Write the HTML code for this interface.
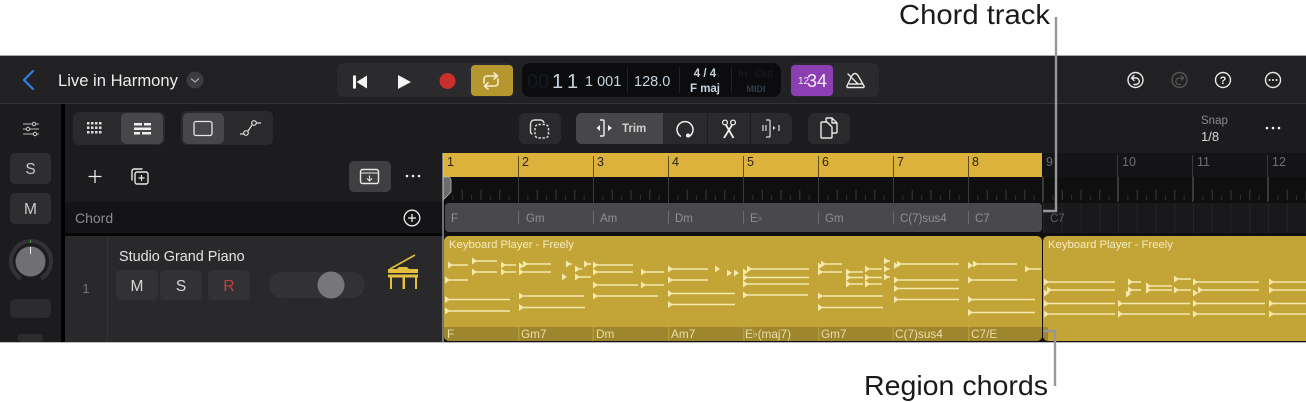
<!DOCTYPE html>
<html lang="en">
<head>
<meta charset="utf-8">
<title>Chord track</title>
<style>
html,body{margin:0;padding:0;background:#fff;width:1306px;height:402px;overflow:hidden}
svg{display:block;font-family:"Liberation Sans",sans-serif}
.n path{fill:none;stroke:#f4e8ae;stroke-width:1.5;marker-start:url(#t)}
.ic{fill:none;stroke:#e8e8e8;stroke-width:1.4;stroke-linecap:round;stroke-linejoin:round}
.ch{font-size:11.5px;fill:#8f8f92}
.rc{font-size:11.8px;fill:#ecdfa6}
.bar{font-size:12.5px;fill:#2a2410}
.bard{font-size:12.5px;fill:#6f6f72}
</style>
</head>
<body>
<svg width="1306" height="402" viewBox="0 0 1306 402" xmlns="http://www.w3.org/2000/svg">
<defs>
<marker id="t" markerUnits="userSpaceOnUse" markerWidth="5" markerHeight="7" refX="0" refY="3.5" orient="0" viewBox="0 0 5 7"><path d="M0 0L5 3.500L0 7z" fill="#f4e8ae"/></marker>
<pattern id="tk" patternUnits="userSpaceOnUse" x="443" y="177" width="75" height="26">
<rect x="0" y="0" width="1" height="24" fill="#3a3a3c"/>
<rect x="18.75" y="13" width="1" height="10" fill="#3a3a3a"/><rect x="37.5" y="13" width="1" height="10" fill="#3a3a3a"/><rect x="56.25" y="13" width="1" height="10" fill="#3a3a3a"/>
<rect x="9.4" y="18" width="1" height="5" fill="#303030"/><rect x="28.1" y="18" width="1" height="5" fill="#303030"/><rect x="46.9" y="18" width="1" height="5" fill="#303030"/><rect x="65.6" y="18" width="1" height="5" fill="#303030"/>
</pattern>
<pattern id="gr" patternUnits="userSpaceOnUse" x="443" y="203" width="18.75" height="30"><rect width="1" height="30" fill="#242426"/></pattern>
</defs>

<rect width="1306" height="402" fill="#fff"/>
<!-- app -->
<rect x="0" y="55" width="1306" height="1" fill="#a8a8a8"/>
<rect x="0" y="56" width="1306" height="286" fill="#1c1c1e"/>
<rect x="0" y="56" width="1306" height="47" fill="#212123"/>
<rect x="0" y="103" width="1306" height="1" fill="#343436"/>
<rect x="0" y="342" width="1306" height="1" fill="#bbb"/>

<!-- header left -->
<path d="M33 71L24 80L33 89" fill="none" stroke="#2f7fe6" stroke-width="2.2" stroke-linecap="round" stroke-linejoin="round"/>
<text x="58" y="86" font-size="16.6" fill="#ececec">Live in Harmony</text>
<circle cx="195" cy="80" r="8.5" fill="#3c3c3f"/>
<path d="M191 78.500L195 82L199 78.500" fill="none" stroke="#a8a8aa" stroke-width="1.2"/>

<!-- transport -->
<rect x="337" y="63" width="176" height="34" rx="7" fill="#2b2b2d"/>
<rect x="353" y="75.500" width="3" height="13" fill="#f4f4f4"/><path d="M367 75.500V88.500L356.500 82z" fill="#f4f4f4"/>
<path d="M398 75V89L411 82z" fill="#f4f4f4"/>
<circle cx="447.500" cy="81" r="8" fill="#c8302b"/>
<rect x="471" y="65" width="42" height="31" rx="4" fill="#b5962f"/>
<path d="M484 83V79a3 3 0 0 1 3-3h10M494 73l3.500 3-3.500 3M498 79v4a3 3 0 0 1-3 3H485M488 83l-3.500 3 3.500 3" fill="none" stroke="#f6efd0" stroke-width="1.6" stroke-linecap="round" stroke-linejoin="round"/>

<!-- LCD -->
<rect x="522" y="63" width="259" height="34" rx="8" fill="#0c0c0e"/>
<text x="527" y="88" font-size="20" fill="#121a22">00</text>
<text x="552" y="88" font-size="20" fill="#c6d3de">1</text><text x="567" y="88" font-size="20" fill="#c6d3de">1</text>
<text x="585" y="86" font-size="14.5" fill="#c6d3de">1 001</text>
<text x="634" y="86" font-size="14.5" fill="#c6d3de">128.0</text>
<rect x="627" y="67" width="1" height="26" fill="#1f2226"/><rect x="679" y="67" width="1" height="26" fill="#1f2226"/><rect x="731" y="67" width="1" height="26" fill="#1f2226"/>
<text x="705" y="77" font-size="11.500" fill="#c6d3de" text-anchor="middle" font-weight="bold">4 / 4</text>
<text x="705" y="92" font-size="11.500" fill="#c6d3de" text-anchor="middle" font-weight="bold">F maj</text>
<text x="738" y="77" font-size="11" fill="#171e25">In</text><text x="755" y="77" font-size="11" fill="#171e25">Out</text>
<text x="756" y="92" font-size="9" fill="#2b3f52" text-anchor="middle" font-weight="bold">MIDI</text>

<!-- count-in / metronome -->
<rect x="791" y="63" width="88" height="34" rx="7" fill="#2b2b2d"/>
<rect x="791" y="65" width="42" height="31" rx="4" fill="#8b3fb2"/>
<text x="798" y="84" font-size="10" fill="#f4ecf8">12</text><text x="807" y="87" font-size="18" fill="#f4ecf8">34</text>
<path class="ic" d="M852 75.500Q855 71.500 858 75.500L864 86a1 1 0 0 1-1 1.500H848a1 1 0 0 1-1-1.500zM849.500 84H861.500M848 74L858 84"/>

<!-- header right -->
<circle class="ic" cx="1135.500" cy="80" r="7.500"/><path class="ic" d="M1132 78h4a3 3 0 0 1 0 6.500h-2M1134 75.500l-2.500 2.500 2.500 2.500" stroke-width="1.200"/>
<circle cx="1179.500" cy="80" r="7.500" fill="none" stroke="#555" stroke-width="1.400"/><path d="M1183 78h-4a3 3 0 0 0 0 6.500h2M1181 75.500l2.500 2.500-2.500 2.500" fill="none" stroke="#555" stroke-width="1.200"/>
<circle class="ic" cx="1223" cy="80" r="7.500"/><text x="1223" y="84" font-size="11" font-weight="bold" fill="#eee" text-anchor="middle">?</text>
<circle class="ic" cx="1273" cy="80" r="7.500"/><circle cx="1269.500" cy="80" r="1" fill="#eee"/><circle cx="1273" cy="80" r="1" fill="#eee"/><circle cx="1276.500" cy="80" r="1" fill="#eee"/>

<!-- left strip -->
<rect x="61" y="104" width="4" height="238" fill="#000"/>
<path d="M23 124h16M23 129h16M23 134h16" stroke="#bbb" stroke-width="1"/>
<circle cx="34" cy="124" r="1.700" fill="#1c1c1e" stroke="#ccc"/><circle cx="28" cy="129" r="1.700" fill="#1c1c1e" stroke="#ccc"/><circle cx="35" cy="134" r="1.700" fill="#1c1c1e" stroke="#ccc"/>
<rect x="10" y="153" width="41" height="31" rx="5" fill="#2e2e30"/>
<text x="30.500" y="174" font-size="15.500" fill="#c8c8c8" text-anchor="middle">S</text>
<rect x="10" y="193" width="41" height="31" rx="5" fill="#2e2e30"/>
<text x="30.500" y="214" font-size="15.500" fill="#c8c8c8" text-anchor="middle">M</text>
<path d="M21 278.500A20 20 0 1 1 41 278.500" fill="none" stroke="#333336" stroke-width="4"/>
<circle cx="30.500" cy="261.500" r="15" fill="#707074"/>
<rect x="30" y="247" width="1" height="7" fill="#f2f2f2"/>
<rect x="30" y="240" width="1" height="3" fill="#3f9a4a"/>
<rect x="10" y="299" width="41" height="19" rx="5" fill="#2c2c2e"/>
<rect x="18" y="334" width="25" height="8" rx="3" fill="#2c2c2e"/>

<!-- toolbar left -->
<rect x="73" y="112" width="92" height="33" rx="6" fill="#2a2a2c"/>
<rect x="121" y="113" width="42" height="31" rx="5" fill="#47474a"/>
<g fill="#ddd"><rect x="87" y="122" width="2.500" height="2.500"/><rect x="91" y="122" width="2.500" height="2.500"/><rect x="95" y="122" width="2.500" height="2.500"/><rect x="99" y="122" width="2.500" height="2.500"/><rect x="87" y="126.500" width="2.500" height="2.500"/><rect x="91" y="126.500" width="2.500" height="2.500"/><rect x="95" y="126.500" width="2.500" height="2.500"/><rect x="99" y="126.500" width="2.500" height="2.500"/><rect x="87" y="131" width="2.500" height="2.500"/><rect x="91" y="131" width="2.500" height="2.500"/><rect x="95" y="131" width="2.500" height="2.500"/><rect x="99" y="131" width="2.500" height="2.500"/></g>
<g fill="#eee"><rect x="134" y="123" width="8" height="2.500"/><rect x="144" y="123" width="7" height="2.500"/><rect x="134" y="127.500" width="17" height="2.500"/><rect x="134" y="132" width="6" height="2.500"/><rect x="142" y="132" width="9" height="2.500"/></g>
<rect x="181" y="111" width="92" height="34" rx="6" fill="#2a2a2c"/>
<rect x="183" y="113" width="41" height="31" rx="5" fill="#47474a"/>
<rect x="194" y="121.500" width="18" height="14" rx="2" fill="none" stroke="#e6e6e6" stroke-width="1.300"/>
<path d="M240 134h4.500M248 131L252 125M256 123h5" stroke="#ddd" stroke-width="1.200" fill="none"/>
<circle cx="246" cy="133" r="2.300" fill="none" stroke="#ddd" stroke-width="1.200"/><circle cx="254" cy="123" r="2.300" fill="none" stroke="#ddd" stroke-width="1.200"/>

<!-- toolbar center -->
<rect x="519" y="113" width="42" height="31" rx="6" fill="#2a2a2c"/>
<rect x="535" y="124.500" width="13.500" height="13.500" rx="3.500" fill="none" stroke="#ddd" stroke-width="1.400" stroke-dasharray="2.400 1.600"/>
<path d="M532.500 134a2.500 2.500 0 0 1-2-2.500V124a4 4 0 0 1 4-4h6a4 4 0 0 1 3.500 3" fill="none" stroke="#ddd" stroke-width="1.400"/>
<rect x="576" y="113" width="216" height="31" rx="6" fill="#2a2a2c"/>
<path d="M582 113H663V144H582a6 6 0 0 1-6-6V119a6 6 0 0 1 6-6z" fill="#47474a"/>
<rect x="707" y="113" width="1" height="31" fill="#1c1c1e"/><rect x="750" y="113" width="1" height="31" fill="#1c1c1e"/>
<path d="M600 120h3a1 1 0 0 1 1 1v14a1 1 0 0 1-1 1h-3" fill="none" stroke="#eee" stroke-width="1.400"/>
<path d="M600 125v6l-3.500-3zM608 125v6l4-3z" fill="#eee"/>
<text x="622" y="132" font-size="11.500" font-weight="bold" fill="#cfcfcf">Trim</text>
<path d="M681 136.500A8 8 0 1 1 688 137" fill="none" stroke="#eee" stroke-width="1.500"/><circle cx="688" cy="135.500" r="2" fill="#eee"/>
<path d="M726 125L733.500 138M732 125L724 138" stroke="#eee" stroke-width="1.800" fill="none"/>
<circle cx="725" cy="122.500" r="2.400" fill="none" stroke="#eee" stroke-width="1.300"/><circle cx="733" cy="122.500" r="2.400" fill="none" stroke="#eee" stroke-width="1.300"/>
<path d="M766 120h3a1 1 0 0 1 1 1v15a1 1 0 0 1-1 1h-3M763 125v6M766 125v6M779 125v6" fill="none" stroke="#ddd" stroke-width="1.200"/>
<path d="M773 126v4l2.500-2z" fill="#ddd"/>
<rect x="808" y="113" width="42" height="31" rx="6" fill="#2a2a2c"/>
<path class="ic" d="M826 122v-3a1 1 0 0 1 1-1h5l5 5v9a1 1 0 0 1-1 1h-3M832 118v5h5M822 122h5l5 5v10a1 1 0 0 1-1 1h-9a1 1 0 0 1-1-1v-14a1 1 0 0 1 1-1z" stroke-width="1.300"/>

<!-- toolbar right -->
<text x="1201" y="124" font-size="11.500" fill="#8a8a8c">Snap</text>
<text x="1201" y="141" font-size="13" fill="#d8d8d8">1/8</text>
<circle cx="1267" cy="128" r="1.300" fill="#eee"/><circle cx="1273" cy="128" r="1.300" fill="#eee"/><circle cx="1279" cy="128" r="1.300" fill="#eee"/>

<!-- track list header -->
<path d="M95 170V183M88.500 176.500H101.500" stroke="#e8e8e8" stroke-width="1.300"/>
<path class="ic" d="M132 180v-9a2 2 0 0 1 2-2h8" stroke-width="1.200"/>
<rect class="ic" x="135" y="172" width="13" height="12" rx="2" stroke-width="1.200"/>
<path d="M141.500 175v6M138.500 178h6" stroke="#e8e8e8" stroke-width="1.200"/>
<rect x="349" y="161" width="42" height="31" rx="5" fill="#3f3f42"/>
<rect class="ic" x="360.500" y="169.500" width="18" height="14" rx="2" stroke-width="1.200"/>
<path d="M360.500 173h18M369.500 175.500v5M367 178.500l2.500 2.500 2.500-2.500" fill="none" stroke="#e8e8e8" stroke-width="1.100"/>
<circle cx="407" cy="176" r="1.300" fill="#eee"/><circle cx="413" cy="176" r="1.300" fill="#eee"/><circle cx="419" cy="176" r="1.300" fill="#eee"/>

<!-- chord row -->
<rect x="65" y="202" width="378" height="31" fill="#141416"/>
<text x="75" y="223" font-size="14" fill="#8c8c8e">Chord</text>
<circle cx="412" cy="218" r="7.800" fill="none" stroke="#ececec" stroke-width="1.300"/>
<path d="M412 214v8M408 218h8" stroke="#ececec" stroke-width="1.300"/>
<rect x="65" y="233" width="378" height="3" fill="#060606"/>

<!-- track row -->
<rect x="65" y="236" width="378" height="106" fill="#29292b"/>
<rect x="107" y="236" width="1" height="106" fill="#333335"/>
<text x="86" y="293" font-size="13" fill="#78787a" text-anchor="middle">1</text>
<text x="119" y="261" font-size="14.4" fill="#e4e4e4">Studio Grand Piano</text>
<rect x="116" y="270" width="42" height="30" rx="5" fill="#323235"/>
<rect x="160" y="270" width="42" height="30" rx="5" fill="#323235"/>
<rect x="208" y="270" width="42" height="30" rx="5" fill="#323235"/>
<text x="137" y="291" font-size="15.500" fill="#d8d8d8" text-anchor="middle">M</text>
<text x="181" y="291" font-size="15.500" fill="#d8d8d8" text-anchor="middle">S</text>
<text x="229" y="291" font-size="15.500" fill="#c5433f" text-anchor="middle">R</text>
<rect x="269" y="272" width="96" height="26" rx="13" fill="#323235"/>
<circle cx="331" cy="285" r="13.500" fill="#77777b"/>
<g fill="#e3bf3e">
<path d="M390 269L415 255" stroke="#e3bf3e" stroke-width="1.600"/>
<path d="M388 269h9l2-2h8l2 2h9v4h-30z"/>
<rect x="388" y="274.500" width="30" height="3"/>
<rect x="390" y="277" width="2" height="12"/><rect x="402.500" y="277" width="2.500" height="12"/><rect x="415" y="277" width="2" height="12"/>
</g>

<!-- timeline -->
<rect x="443" y="153" width="863" height="80" fill="#0f0f10"/>
<rect x="1043" y="153" width="263" height="24" fill="#141416"/>
<rect x="443" y="177" width="863" height="26" fill="url(#tk)"/>
<rect x="1043" y="203" width="263" height="30" fill="#19191b"/>
<rect x="1043" y="203" width="263" height="30" fill="url(#gr)"/>
<rect x="1117" y="155" width="1" height="47" fill="#3a3a3c"/><rect x="1192" y="155" width="1" height="47" fill="#3a3a3c"/><rect x="1267" y="155" width="1" height="47" fill="#3a3a3c"/><rect x="1042" y="176" width="1" height="27" fill="#3a3a3c"/>
<rect x="443" y="153" width="599" height="24" fill="#dcb23c"/>
<g fill="#5d4d18"><rect x="518" y="156" width="1" height="21"/><rect x="593" y="156" width="1" height="21"/><rect x="668" y="156" width="1" height="21"/><rect x="743" y="156" width="1" height="21"/><rect x="818" y="156" width="1" height="21"/><rect x="893" y="156" width="1" height="21"/><rect x="968" y="156" width="1" height="21"/></g>
<g fill="#3a3a3c"><rect x="518" y="177" width="1" height="26"/><rect x="593" y="177" width="1" height="26"/><rect x="668" y="177" width="1" height="26"/><rect x="743" y="177" width="1" height="26"/><rect x="818" y="177" width="1" height="26"/><rect x="893" y="177" width="1" height="26"/><rect x="968" y="177" width="1" height="26"/></g>
<text class="bar" x="447" y="166">1</text><text class="bar" x="522" y="166">2</text><text class="bar" x="597" y="166">3</text><text class="bar" x="672" y="166">4</text><text class="bar" x="747" y="166">5</text><text class="bar" x="822" y="166">6</text><text class="bar" x="897" y="166">7</text><text class="bar" x="972" y="166">8</text>
<text class="bard" x="1046" y="166">9</text><text class="bard" x="1122" y="166">10</text><text class="bard" x="1197" y="166">11</text><text class="bard" x="1272" y="166">12</text>

<!-- playhead -->
<path d="M443 177h5a3 3 0 0 1 3 3v12l-7 7h-1z" fill="#6b6b6e" stroke="#b4b4b6" stroke-width="0.800"/>

<!-- chord track -->
<rect x="445" y="203" width="597" height="29" rx="4" fill="#49484c"/>
<g fill="#6c6c6e"><rect x="518" y="211" width="1" height="13"/><rect x="593" y="211" width="1" height="13"/><rect x="668" y="211" width="1" height="13"/><rect x="743" y="211" width="1" height="13"/><rect x="818" y="211" width="1" height="13"/><rect x="893" y="211" width="1" height="13"/><rect x="968" y="211" width="1" height="13"/></g>
<text class="ch" x="451" y="222">F</text><text class="ch" x="526" y="222">Gm</text><text class="ch" x="600" y="222">Am</text><text class="ch" x="675" y="222">Dm</text><text class="ch" x="750" y="222">E<tspan font-size="10" dy="-1">♭</tspan></text><text class="ch" x="825" y="222">Gm</text><text class="ch" x="900" y="222">C(7)sus4</text><text class="ch" x="975" y="222">C7</text>
<text x="1050" y="222" font-size="11.5" fill="#606062">C7</text>

<!-- regions -->
<rect x="443" y="233" width="863" height="109" fill="#101010"/>
<line x1="443" y1="153" x2="443" y2="342" stroke="#cfcfcf" stroke-width="1"/>
<rect x="444" y="236" width="598" height="105" rx="5" fill="#c3a537"/>
<path d="M1306 236H1048a5 5 0 0 0-5 5v95a5 5 0 0 0 5 5h258z" fill="#c3a537"/>
<path d="M444 327H1042V336a5 5 0 0 1-5 5H449a5 5 0 0 1-5-5z" fill="#9e862f"/>
<path d="M1043 327h5v14a5 5 0 0 1-5-5z" fill="#9e862f"/>
<g fill="#b49a35"><rect x="518" y="327" width="1.500" height="14"/><rect x="592.500" y="327" width="1.500" height="14"/><rect x="668" y="327" width="1.500" height="14"/><rect x="743" y="327" width="1.500" height="14"/><rect x="818" y="327" width="1.500" height="14"/><rect x="892.500" y="327" width="1.500" height="14"/><rect x="968" y="327" width="1.500" height="14"/></g>
<text x="449" y="248" font-size="11.3" fill="#f5ebc0">Keyboard Player - Freely</text>
<text x="1048" y="248" font-size="11.3" fill="#f5ebc0">Keyboard Player - Freely</text>
<text class="rc" x="447" y="338">F</text><text class="rc" x="521" y="338">Gm7</text><text class="rc" x="596" y="338">Dm</text><text class="rc" x="671" y="338">Am7</text><text class="rc" x="745" y="338">E<tspan font-size="10" dy="-1">♭</tspan><tspan dy="1">(maj7)</tspan></text><text class="rc" x="821" y="338">Gm7</text><text class="rc" x="895" y="338">C(7)sus4</text><text class="rc" x="971" y="338">C7/E</text>

<!-- notes -->
<g class="n">
<path d="M448 265H468"/><path d="M472 261H497"/><path d="M472 272H497"/><path d="M501 265H516"/><path d="M501 272H516"/><path d="M445 280H468"/><path d="M445 299.500H510"/><path d="M445 311H510"/>
<path d="M519 266H522"/><path d="M523 264H551"/><path d="M519 272H551"/><path d="M519 296H584"/><path d="M519 307.500H585"/>
<path d="M566 264H572"/><path d="M575 269H582"/><path d="M584 264H591"/><path d="M562 277H566"/><path d="M575 277H591"/>
<path d="M593 265H633"/><path d="M593 272H633"/><path d="M593 285H638"/><path d="M593 296H658"/><path d="M641 272H664"/><path d="M641 285H664"/>
<path d="M668 269H708"/><path d="M668 280H708"/><path d="M668 293.500H735"/><path d="M668 304.500H735"/>
<path d="M715 269H719"/><path d="M727 273H729"/><path d="M734 273H737"/>
<path d="M747 269H809"/><path d="M743 277.500H809"/><path d="M743 284H809"/><path d="M743 295H808"/><path d="M743 272H745"/>
<path d="M818 266H820"/><path d="M821 264H842"/><path d="M818 272H842"/><path d="M818 296H883"/><path d="M818 307.500H883"/>
<path d="M846 272H863"/><path d="M846 277.500H863"/><path d="M846 284H863"/>
<path d="M865 269H882"/><path d="M865 277.500H882"/><path d="M865 284H882"/>
<path d="M884 261H890"/><path d="M884 269H890"/><path d="M884 277H890"/>
<path d="M894 265.500H896"/><path d="M897 264H959"/><path d="M894 280H959"/><path d="M894 288.500H959"/><path d="M894 299.500H959"/>
<path d="M968 265.500H971"/><path d="M973 264H1017"/><path d="M968 280H1017"/><path d="M968 299.500H1035"/><path d="M968 312.500H1035"/>
<path d="M1025 269H1041"/>
<path d="M1044 282H1115"/><path d="M1047 290H1115"/><path d="M1044 293H1046"/><path d="M1044 303.500H1115"/><path d="M1044 314H1115"/>
<path d="M1118 303.500H1190"/><path d="M1118 314H1190"/><path d="M1128 282H1141"/><path d="M1128 290H1141"/><path d="M1126 294H1128"/>
<path d="M1146 286H1172"/><path d="M1146 290H1172"/><path d="M1174 279H1191"/><path d="M1174 290H1191"/>
<path d="M1193 282H1259"/><path d="M1198 290H1259"/><path d="M1193 293H1196"/><path d="M1193 303.500H1265"/><path d="M1193 314H1265"/>
<path d="M1269 282H1306"/><path d="M1269 290H1306"/><path d="M1269 303.500H1306"/><path d="M1269 314H1306"/>
</g>

<!-- annotations -->
<text x="899" y="24" font-size="28" fill="#1a1a1a" textLength="151" lengthAdjust="spacingAndGlyphs">Chord track</text>
<text x="864" y="395" font-size="28" fill="#1a1a1a" textLength="184" lengthAdjust="spacingAndGlyphs">Region chords</text>
<path d="M1056 17V211H1043" fill="none" stroke="#979797" stroke-width="2.400"/>
<path d="M1055 386V331H1043" fill="none" stroke="#979797" stroke-width="2.400"/>
</svg>
</body>
</html>
